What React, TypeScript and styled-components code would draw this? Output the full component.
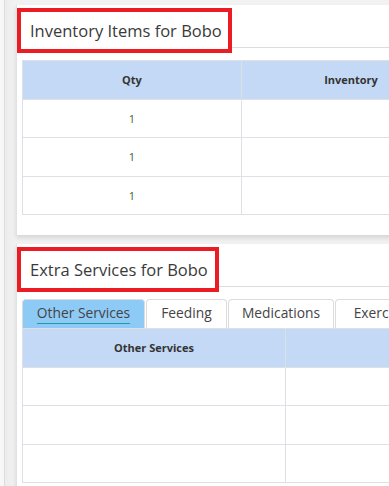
import React from "react";
import styled, { createGlobalStyle } from "styled-components";

const GlobalStyle = createGlobalStyle`
  html, body { margin: 0; padding: 0; }
  body {
    background: #efefef;
    font-family: "Open Sans", "Noto Sans", Arial, sans-serif;
    color: #444;
  }
`;

const Page = styled.div`
  width: 389px;
  height: 486px;
  overflow: hidden;
  box-sizing: border-box;
  padding: 5px 0 0 16px;
  background: linear-gradient(to right, #f7f7f7 0, #f7f7f7 4px, #dcdcdc 4px, #dcdcdc 5px, #ececec 5px, #f2f2f2 15px);
  display: flex;
  flex-direction: column;
  gap: 9px;
`;

const Card = styled.section`
  width: 449px;
  flex-shrink: 0;
  background: #fff;
  border-left: 1px solid #e2e2e2;
  box-shadow: 0 3px 5px rgba(0, 0, 0, 0.12);
  padding-bottom: 20px;
`;

const CardHeader = styled.div`
  height: 43px;
  border-bottom: 1px solid #dcdcdc;
  display: flex;
  align-items: flex-start;
  padding-top: 3px;
  box-sizing: border-box;
`;

const Title = styled.h2<{ $w: number }>`
  margin: 0 0 -6px 0;
  width: ${({ $w }) => $w}px;
  height: 45px;
  box-sizing: border-box;
  border: 4px solid #ec1c24;
  background: #fff;
  display: flex;
  align-items: center;
  padding-left: 9px;
  font-size: 16.5px;
  font-weight: 500;
  color: #3a3a3a;
  white-space: nowrap;
`;

const Body = styled.div`
  padding: 12px 5px 0 5px;
`;

const Table = styled.table<{ $first: number }>`
  border-collapse: collapse;
  table-layout: fixed;
  width: 100%;
  font-size: 11px;

  col:first-child { width: ${({ $first }) => $first}px; }

  th, td {
    border: 1px solid #dde0e4;
    text-align: center;
    height: 37.5px;
    padding: 0;
  }
  th {
    background: #c3d9f5;
    color: #333;
    font-weight: 700;
  }
  td {
    color: #3f5e33;
  }
`;

const Tabs = styled.div`
  display: flex;
  gap: 1px;
  height: 29px;
`;

const Tab = styled.div<{ $active?: boolean; $w: number }>`
  width: ${({ $w }) => $w}px;
  flex-shrink: 0;
  box-sizing: border-box;
  border: 1px solid #dcdcdc;
  border-bottom: none;
  border-radius: 4px 4px 0 0;
  background: ${({ $active }) => ($active ? "#8dcaf5" : "#fff")};
  display: flex;
  align-items: center;
  justify-content: center;
  font-size: 13.8px;
  color: #444;
  white-space: nowrap;
  overflow: hidden;

  span {
    padding-bottom: 1px;
    border-bottom: ${({ $active }) => ($active ? "1px solid #1f9aad" : "1px solid transparent")};
    line-height: 18px;
  }
`;

const qty = [1, 1, 1];
const tabs = [
  { label: "Other Services", w: 123, active: true },
  { label: "Feeding", w: 81 },
  { label: "Medications", w: 106 },
  { label: "Exercise", w: 90 },
];

export default function App() {
  return (
    <>
      <GlobalStyle />
      <Page>
        <Card>
          <CardHeader>
            <Title $w={215}>Inventory Items for Bobo</Title>
          </CardHeader>
          <Body>
            <Table $first={219}>
              <colgroup>
                <col />
                <col />
              </colgroup>
              <thead>
                <tr>
                  <th>Qty</th>
                  <th>Inventory</th>
                </tr>
              </thead>
              <tbody>
                {qty.map((q, i) => (
                  <tr key={i}>
                    <td>{q}</td>
                    <td></td>
                  </tr>
                ))}
              </tbody>
            </Table>
          </Body>
        </Card>
        <Card>
          <CardHeader>
            <Title $w={202}>Extra Services for Bobo</Title>
          </CardHeader>
          <Body>
            <Tabs>
              {tabs.map((t) => (
                <Tab key={t.label} $w={t.w} $active={t.active}>
                  <span>{t.label}</span>
                </Tab>
              ))}
            </Tabs>
            <Table $first={263}>
              <colgroup>
                <col />
                <col />
              </colgroup>
              <thead>
                <tr>
                  <th>Other Services</th>
                  <th></th>
                </tr>
              </thead>
              <tbody>
                {[0, 1, 2].map((i) => (
                  <tr key={i}>
                    <td></td>
                    <td></td>
                  </tr>
                ))}
              </tbody>
            </Table>
          </Body>
        </Card>
      </Page>
    </>
  );
}
